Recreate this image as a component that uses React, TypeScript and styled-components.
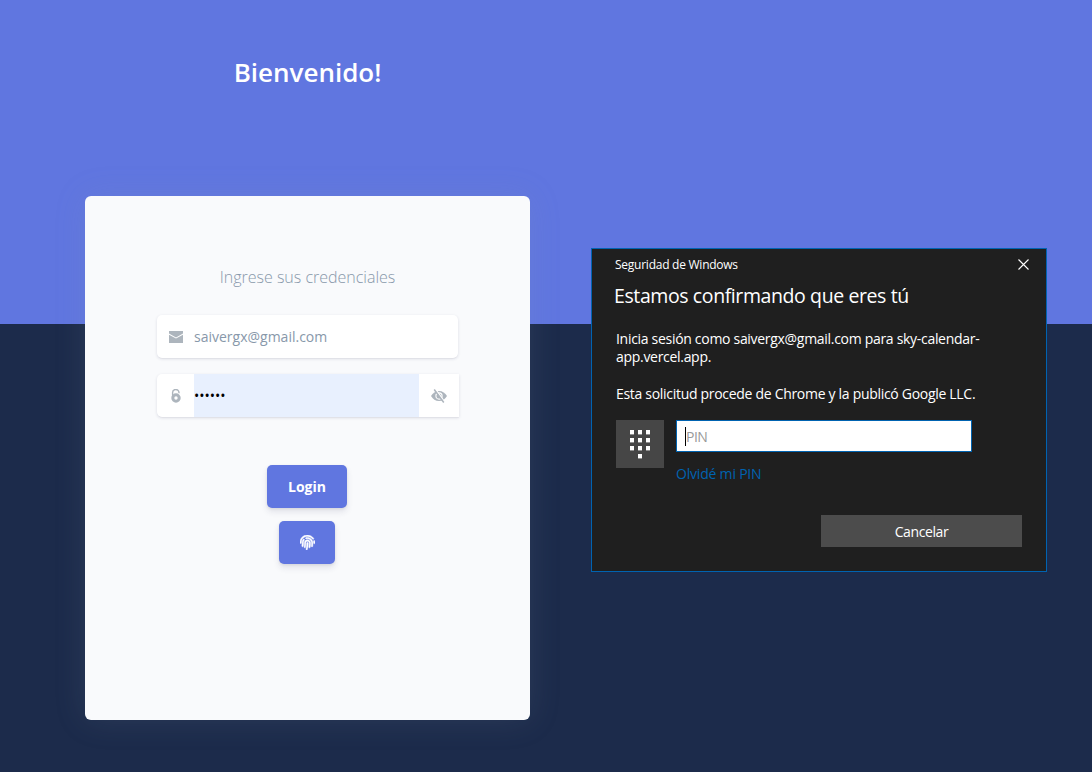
import React from "react";
import styled, { createGlobalStyle } from "styled-components";
import { FaFingerprint } from "react-icons/fa";

const GlobalStyle = createGlobalStyle`
  * { box-sizing: border-box; }
  body { margin: 0; font-family: "Open Sans", sans-serif; }
  h1, h2, p { margin: 0; }
  button, input { font-family: inherit; }
`;

const Page = styled.main`
  position: relative;
  height: 772px;
  overflow: hidden;
  background: linear-gradient(#6076e0 0 324px, #1c2b4b 324px);
`;

const Column = styled.section`
  width: 445px;
  margin-left: 85px;
  padding-top: 52px;
`;

const Welcome = styled.h1`
  height: 144px;
  color: #fff;
  font-size: 26px;
  font-weight: 600;
  line-height: 41px;
  text-align: center;
`;

const Card = styled.form`
  display: flex;
  flex-direction: column;
  align-items: center;
  height: 524px;
  padding-top: 68px;
  border-radius: 6px;
  background: #f9fafc;
  box-shadow: 0 0 32px rgba(136, 152, 170, 0.15);
`;

const Hint = styled.p`
  margin-bottom: 24px;
  color: #8898aa;
  font-size: 16px;
  font-weight: 300;
  line-height: 27px;
`;

const Field = styled.label<{ $square?: boolean }>`
  display: flex;
  width: ${(p) => (p.$square ? 302 : 301)}px;
  height: 43px;
  margin: 0 0 16px ${(p) => (p.$square ? 1 : 0)}px;
  overflow: hidden;
  border-radius: ${(p) => (p.$square ? "5px 0 0 5px" : "5px")};
  background: #fff;
  box-shadow: 0 1px 3px rgba(50, 50, 93, 0.15), 0 1px 0 rgba(0, 0, 0, 0.02);
`;

const Addon = styled.span<{ $width: number }>`
  display: flex;
  align-items: center;
  justify-content: center;
  flex: 0 0 ${(p) => p.$width}px;
  color: #adb5bd;
`;

const Input = styled.input<{ $filled?: boolean }>`
  flex: 1;
  min-width: 0;
  padding: 0;
  border: 0;
  outline: 0;
  color: ${(p) => (p.$filled ? "#000" : "#8898aa")};
  background: ${(p) => (p.$filled ? "#e8f0fe" : "transparent")};
  font-size: 14px;
`;

const Actions = styled.div`
  display: flex;
  flex-direction: column;
  align-items: center;
  gap: 13px;
  margin: 32px 1px 0 0;
`;

const Button = styled.button<{ $width: number }>`
  display: flex;
  align-items: center;
  justify-content: center;
  width: ${(p) => p.$width}px;
  height: 43px;
  padding: 0;
  border: 0;
  border-radius: 5px;
  color: #fff;
  background: #6076e0;
  font-size: 14px;
  font-weight: 700;
  box-shadow: 0 4px 6px rgba(50, 50, 93, 0.11), 0 1px 3px rgba(0, 0, 0, 0.08);
`;

const FingerprintIcon = styled(FaFingerprint)`
  stroke: currentColor;
  stroke-width: 16px;
`;

const Dialog = styled.section`
  position: absolute;
  top: 248px;
  left: 591px;
  width: 456px;
  height: 324px;
  padding: 0 24px;
  border: 1px solid #0063b1;
  color: #fff;
  background: #1f1f1f;
`;

const TitleBar = styled.header`
  display: flex;
  align-items: center;
  justify-content: space-between;
  height: 32px;
  margin: 0 -7px 0 -1px;
  padding-bottom: 1px;
  font-size: 12px;
  letter-spacing: -0.25px;
`;

const Heading = styled.h2`
  margin-left: -2px;
  font-size: 19.5px;
  font-weight: 400;
  line-height: 30px;
  letter-spacing: -0.4px;
`;

const Message = styled.p`
  margin-top: 19px;
  font-size: 14px;
  line-height: 18px;
  letter-spacing: -0.3px;
  white-space: nowrap;
`;

const PinRow = styled.div`
  display: flex;
  gap: 12px;
  margin-top: 17px;
`;

const Keypad = styled.div`
  display: flex;
  align-items: center;
  justify-content: center;
  width: 48px;
  height: 48px;
  background: #464646;
`;

const PinColumn = styled.div`
  display: flex;
  flex-direction: column;
`;

const PinBox = styled.div`
  display: flex;
  align-items: center;
  width: 296px;
  height: 32px;
  padding-left: 8px;
  border: 1px solid #0063b1;
  color: #999;
  background: #fff;
  font-size: 14px;
  letter-spacing: -0.5px;
`;

const Caret = styled.span`
  width: 1px;
  height: 19px;
  background: #000;
`;

const Forgot = styled.a`
  margin-top: 13px;
  color: #0063b1;
  font-size: 14px;
  line-height: 18px;
  letter-spacing: -0.2px;
`;

const Cancel = styled.button`
  display: block;
  width: 201px;
  height: 32px;
  margin: 32px 0 0 auto;
  padding: 0;
  border: 0;
  color: #fff;
  background: #4c4c4c;
  font-size: 14px;
  letter-spacing: -0.4px;
`;

const MailIcon = () => (
  <svg width="14" height="12" viewBox="0 0 14 12" fill="currentColor">
    <path d="M0 0h14v2.6L7 6.4 0 2.6zM0 3.8l7 3.8 7-3.8V12H0z" />
  </svg>
);

const LockIcon = () => (
  <svg width="10" height="14" viewBox="0 0 10 14" fill="none" stroke="currentColor">
    <path d="M1.6 8V3.9a3.2 3.2 0 0 1 6.4-.4v.8" strokeWidth="1.4" />
    <circle cx="5" cy="9" r="3.2" strokeWidth="3" />
  </svg>
);

const EyeOffIcon = () => (
  <svg width="16" height="14" viewBox="0 0 16 14" fill="none">
    <path d="M0 7c1.7-3 4.6-5 8-5s6.300 2 8 5c-1.700 3-4.600 5-8 5S1.700 10 0 7z" fill="currentColor" />
    <circle cx="8" cy="7" r="3.1" stroke="#fff" strokeWidth="1.1" />
    <path d="M4.600.3l9.200 12.800" stroke="#fff" strokeWidth="1.400" />
    <path d="M3.200.5l9.600 13" stroke="currentColor" strokeWidth="1.500" />
  </svg>
);

const keys = [[0, 0], [8, 0], [16, 0], [0, 8], [8, 8], [16, 8], [0, 16], [8, 16], [16, 16], [8, 24]];

export default function App() {
  return (
    <Page>
      <GlobalStyle />
      <Column>
        <Welcome>Bienvenido!</Welcome>
        <Card>
          <Hint>Ingrese sus credenciales</Hint>
          <Field>
            <Addon $width={37}><MailIcon /></Addon>
            <Input defaultValue="saivergx@gmail.com" />
          </Field>
          <Field $square>
            <Addon $width={37}><LockIcon /></Addon>
            <Input $filled type="password" defaultValue="123456" />
            <Addon $width={40}><EyeOffIcon /></Addon>
          </Field>
          <Actions>
            <Button type="button" $width={80}>Login</Button>
            <Button type="button" $width={56} aria-label="Huella"><FingerprintIcon size={15} /></Button>
          </Actions>
        </Card>
      </Column>
      <Dialog>
        <TitleBar>
          <span>Seguridad de Windows</span>
          <svg width="11" height="11" viewBox="0 0 11 11" stroke="#fff" strokeWidth="1.1">
            <path d="M.5.5l10 10M10.5.5l-10 10" />
          </svg>
        </TitleBar>
        <Heading>Estamos confirmando que eres tú</Heading>
        <Message>
          Inicia sesión como saivergx@gmail.com para sky-calendar-
          <br />
          app.vercel.app.
        </Message>
        <Message>Esta solicitud procede de Chrome y la publicó Google LLC.</Message>
        <PinRow>
          <Keypad>
            <svg width="20" height="29" viewBox="0 0 20 29" fill="#fff">
              {keys.map(([x, y]) => <rect key={`${x}-${y}`} x={x} y={y} width="4" height="4.4" />)}
            </svg>
          </Keypad>
          <PinColumn>
            <PinBox><Caret />PIN</PinBox>
            <Forgot>Olvidé mi PIN</Forgot>
          </PinColumn>
        </PinRow>
        <Cancel>Cancelar</Cancel>
      </Dialog>
    </Page>
  );
}
